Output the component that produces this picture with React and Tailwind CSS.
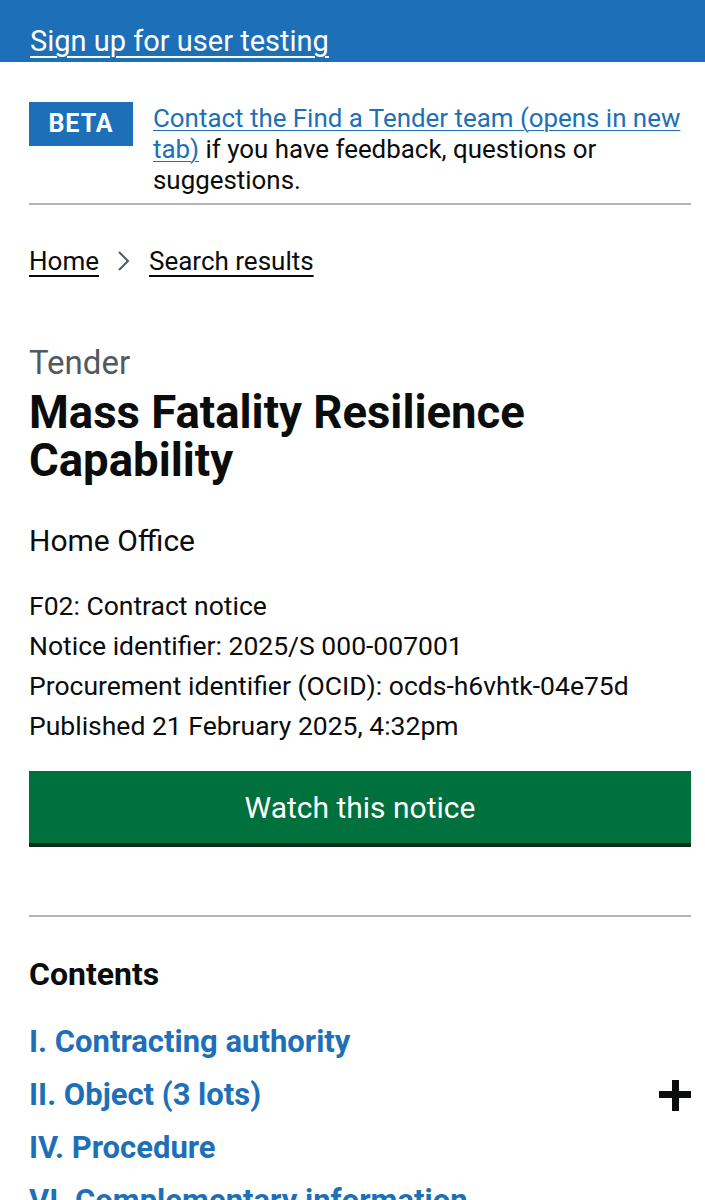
import React from 'react';

const font = { fontFamily: 'Roboto, "Liberation Sans", sans-serif' };

function PlusIcon() {
  return (
    <svg width="32" height="31" viewBox="0 0 32 31" aria-hidden="true">
      <rect x="13" y="0" width="7" height="31" fill="#0b0c0c" />
      <rect x="0" y="11" width="32" height="7" fill="#0b0c0c" />
    </svg>
  );
}

const contents = [
  'I. Contracting authority',
  'II. Object (3 lots)',
  'IV. Procedure',
  'VI. Complementary information',
];

export default function App() {
  return (
    <div className="bg-white text-[#0b0c0c] h-[1200px] overflow-hidden" style={font}>
      {/* phase banner top */}
      <div className="bg-[#1d70b8] h-[62px] pl-[30px] pr-[14px] flex items-end">
        <a href="#" className="text-white text-[29px] leading-[40px] underline underline-offset-[5px] decoration-[2px] mb-[1px]">
          Sign up for user testing
        </a>
      </div>

      <div className="pl-[29px] pr-[14px]">
        {/* beta banner */}
        <div className="flex items-start gap-[20px] pt-[40px] pb-[7px] border-b-2 border-[#b1b4b6]">
          <strong className="shrink-0 bg-[#1d70b8] text-white font-bold text-[25px] tracking-[1px] w-[104px] h-[44px] flex items-center justify-center">
            BETA
          </strong>
          <p className="text-[25.9px] leading-[31px] mt-[1px]">
            <a href="#" className="text-[#1d70b8] underline underline-offset-[3px] decoration-[1px]">
              Contact the Find a Tender team (opens in new tab)
            </a>{' '}
            if you have feedback, questions or suggestions.
          </p>
        </div>

        {/* breadcrumbs */}
        <nav className="flex items-center h-[40px] mt-[36px] text-[26px]">
          <a href="#" className="underline underline-offset-[5px] decoration-[2px]">Home</a>
          <svg width="14" height="22" viewBox="0 0 14 22" className="mx-[18px]" aria-hidden="true">
            <path d="M2 2 L11 11 L2 20" fill="none" stroke="#505a5f" strokeWidth="2" />
          </svg>
          <a href="#" className="underline underline-offset-[5px] decoration-[2px]">Search results</a>
        </nav>

        {/* title */}
        <div className="mt-[62px]">
          <span className="block text-[#505a5f] text-[33px] leading-[40px]">Tender</span>
          <h1 className="font-bold text-[45.5px] leading-[48px] mt-[6px]">
            Mass Fatality Resilience Capability
          </h1>
        </div>

        <p className="text-[30px] leading-[40px] mt-[36px]">Home Office</p>

        <div className="text-[26.5px] leading-[40px] mt-[25px]">
          <p>F02: Contract notice</p>
          <p>Notice identifier: 2025/S 000-007001</p>
          <p>Procurement identifier (OCID): ocds-h6vhtk-04e75d</p>
          <p>Published 21 February 2025, 4:32pm</p>
        </div>

        <button className="mt-[25px] w-full h-[76px] bg-[#00703c] text-white text-[30px] border-b-[4px] border-[#002d18]">
          Watch this notice
        </button>

        <hr className="mt-[68px] border-0 border-t-2 border-[#b1b4b6]" />

        <h2 className="font-bold text-[32px] leading-[40px] mt-[37px]">Contents</h2>

        <ul className="mt-[22px]">
          {contents.map((item, i) => (
            <li key={item} className="flex items-center justify-between h-[53px]">
              <a href="#" className="text-[#1d70b8] font-bold text-[31px]">{item}</a>
              {i === 1 && <PlusIcon />}
            </li>
          ))}
        </ul>
      </div>
    </div>
  );
}
